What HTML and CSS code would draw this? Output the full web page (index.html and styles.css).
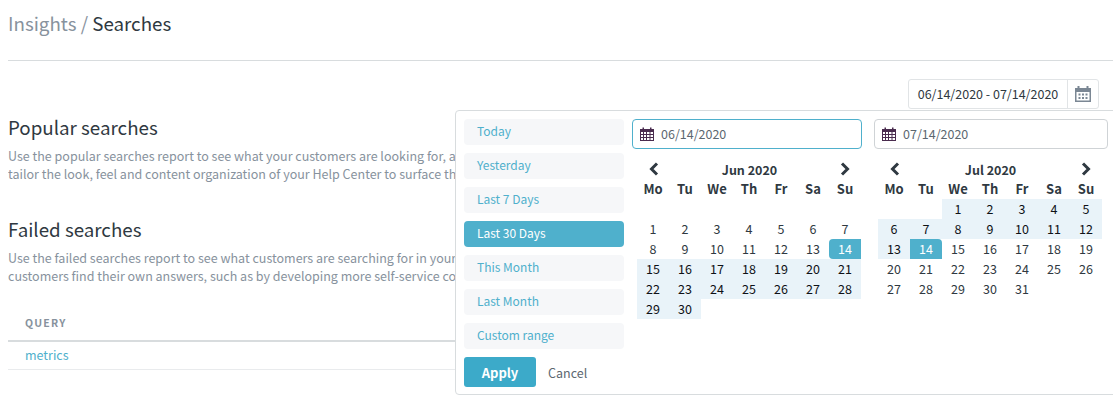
FILE: index.html
```html
<!DOCTYPE html>
<html lang="en">
<head>
    <meta charset="UTF-8">
    <meta name="viewport" content="width=device-width, initial-scale=1.0">
    <title>Insights / Searches</title>
    <link rel="stylesheet" href="styles.css">
</head>
<body>
    <div class="page">
        <h1 class="crumbs"><span class="crumbs-parent">Insights /</span> Searches</h1>

        <div class="toolbar">
            <div class="range-field">
                <span class="range-value">06/14/2020 - 07/14/2020</span>
                <span class="range-addon">
                    <svg width="16" height="16" viewBox="0 0 16 16"><path fill="#7b8794" d="M0 2h2.500V0h2v2h7V0h2v2H16v14H0zM1.500 6v8.500h13V6z"/><path fill="#7b8794" d="M3.500 7.500h2v2h-2zM7 7.500h2v2H7zM10.500 7.500h2v2h-2zM3.500 11h2v2h-2zM7 11h2v2H7zM10.500 11h2v2h-2z"/></svg>
                </span>
            </div>
        </div>

        <section class="report report-popular">
            <h2>Popular searches</h2>
            <p>Use the popular searches report to see what your customers are looking for, and use that information to<br>tailor the look, feel and content organization of your Help Center to surface the right content.</p>
        </section>

        <section class="report report-failed">
            <h2>Failed searches</h2>
            <p>Use the failed searches report to see what customers are searching for in your Help Center and not finding, and help<br>customers find their own answers, such as by developing more self-service content.</p>
        </section>

        <div class="query-table">
            <div class="query-head">QUERY</div>
            <div class="query-row"><a href="#">metrics</a></div>
        </div>
    </div>

    <!-- date range dropdown -->
    <div class="picker">
        <div class="picker-side">
            <a class="range-item" href="#">Today</a>
            <a class="range-item" href="#">Yesterday</a>
            <a class="range-item" href="#">Last 7 Days</a>
            <a class="range-item active" href="#">Last 30 Days</a>
            <a class="range-item" href="#">This Month</a>
            <a class="range-item" href="#">Last Month</a>
            <a class="range-item" href="#">Custom range</a>
            <div class="picker-actions">
                <button class="btn-apply" type="button">Apply</button>
                <a class="btn-cancel" href="#">Cancel</a>
            </div>
        </div>

        <div class="calendar cal-left">
            <div class="date-input focused">
                <svg class="date-icon" width="14" height="14" viewBox="0 0 14 14"><path fill="#4a2c4f" d="M0 2h2.500V0.500h1.500V2h6V0.500h1.500V2H14v12H0zM1 5v2h2V5zm3 0v2h2V5zm3 0v2h2.500V5zm3.500 0v2H13V5zM1 8v2h2V8zm3 0v2h2V8zm3 0v2h2.500V8zm3.500 0v2H13V8zM1 11v2h2v-2zm3 0v2h2v-2zm3 0v2h2.500v-2zm3.500 0v2H13v-2z"/></svg>
                06/14/2020
            </div>
            <div class="month-nav">
                <svg width="12" height="14" viewBox="0 0 12 14"><path d="M9 1.500 3.500 7 9 12.500" fill="none" stroke="#2f3941" stroke-width="3"/></svg>
                <span>Jun 2020</span>
                <svg width="12" height="14" viewBox="0 0 12 14"><path d="M3 1.500 8.500 7 3 12.500" fill="none" stroke="#2f3941" stroke-width="3"/></svg>
            </div>
            <div class="days">
                <b>Mo</b><b>Tu</b><b>We</b><b>Th</b><b>Fr</b><b>Sa</b><b>Su</b>
                <i></i><i></i><i></i><i></i><i></i><i></i><i></i>
                <i>1</i><i>2</i><i>3</i><i>4</i><i>5</i><i>6</i><i>7</i>
                <i>8</i><i>9</i><i>10</i><i>11</i><i>12</i><i>13</i><i class="end end-left">14</i>
                <i class="in">15</i><i class="in">16</i><i class="in">17</i><i class="in">18</i><i class="in">19</i><i class="in">20</i><i class="in">21</i>
                <i class="in">22</i><i class="in">23</i><i class="in">24</i><i class="in">25</i><i class="in">26</i><i class="in">27</i><i class="in">28</i>
                <i class="in">29</i><i class="in">30</i>
            </div>
        </div>

        <div class="calendar cal-right">
            <div class="date-input">
                <svg class="date-icon" width="14" height="14" viewBox="0 0 14 14"><path fill="#4a2c4f" d="M0 2h2.500V0.500h1.500V2h6V0.500h1.500V2H14v12H0zM1 5v2h2V5zm3 0v2h2V5zm3 0v2h2.500V5zm3.500 0v2H13V5zM1 8v2h2V8zm3 0v2h2V8zm3 0v2h2.500V8zm3.500 0v2H13V8zM1 11v2h2v-2zm3 0v2h2v-2zm3 0v2h2.500v-2zm3.500 0v2H13v-2z"/></svg>
                07/14/2020
            </div>
            <div class="month-nav">
                <svg width="12" height="14" viewBox="0 0 12 14"><path d="M9 1.500 3.500 7 9 12.500" fill="none" stroke="#2f3941" stroke-width="3"/></svg>
                <span>Jul 2020</span>
                <svg width="12" height="14" viewBox="0 0 12 14"><path d="M3 1.500 8.500 7 3 12.500" fill="none" stroke="#2f3941" stroke-width="3"/></svg>
            </div>
            <div class="days">
                <b>Mo</b><b>Tu</b><b>We</b><b>Th</b><b>Fr</b><b>Sa</b><b>Su</b>
                <i></i><i></i><i class="in">1</i><i class="in">2</i><i class="in">3</i><i class="in">4</i><i class="in">5</i>
                <i class="in">6</i><i class="in">7</i><i class="in">8</i><i class="in">9</i><i class="in">10</i><i class="in">11</i><i class="in">12</i>
                <i class="in">13</i><i class="end end-right">14</i><i>15</i><i>16</i><i>17</i><i>18</i><i>19</i>
                <i>20</i><i>21</i><i>22</i><i>23</i><i>24</i><i>25</i><i>26</i>
                <i>27</i><i>28</i><i>29</i><i>30</i><i>31</i>
            </div>
        </div>
    </div>
</body>
</html>
```

FILE: styles.css
```css
html, body {
    height: 100%;
}

body {
    margin: 0;
    font-family: "Noto Sans CJK SC", "Noto Sans", sans-serif;
    color: #2f3941;
    background: #fff;
    overflow: hidden;
    position: relative;
}

.page {
    padding: 0 0 0 8px;
}

.crumbs {
    margin: 0;
    height: 61px;
    box-sizing: border-box;
    padding-top: 8px;
    border-bottom: 1px solid #d8dcde;
    font-size: 18.750px;
    font-weight: 400;
    line-height: 30px;
}

.crumbs-parent {
    color: #87929d;
}

.toolbar {
    display: flex;
    justify-content: flex-end;
    padding: 18px 14px 0 0;
}

.range-field {
    display: flex;
    height: 30px;
    box-sizing: border-box;
    border: 1px solid #e1e4e6;
    border-radius: 3px;
    font-size: 12.500px;
}

.range-value {
    width: 159px;
    box-sizing: border-box;
    text-align: center;
    line-height: 28px;
    border-right: 1px solid #e1e4e6;
}

.range-addon {
    width: 30px;
    display: flex;
    align-items: center;
    justify-content: center;
}

.report {
    white-space: nowrap;
    overflow: hidden;
}

.report h2 {
    margin: 0 0 5px;
    font-size: 18.750px;
    font-weight: 400;
    line-height: 30px;
}

.report p {
    margin: 0;
    font-size: 12.500px;
    line-height: 18px;
    color: #87929d;
}

.report-popular {
    padding-top: 3px;
}

.report-failed {
    padding-top: 31px;
}

.query-table {
    margin-top: 24px;
    font-size: 12.500px;
}

.query-head {
    height: 31px;
    padding-left: 17px;
    border-bottom: 2px solid #d8dcde;
    font-size: 10.500px;
    font-weight: 700;
    letter-spacing: 1.200px;
    line-height: 28px;
    color: #87929d;
}

.query-row {
    height: 27px;
    padding-left: 17px;
    border-bottom: 1px solid #e9ebed;
    line-height: 25px;
}

.query-row a {
    color: #4fb0cc;
    text-decoration: none;
}

/* dropdown */
.picker {
    position: absolute;
    left: 455px;
    top: 110px;
    width: 670px;
    height: 285px;
    box-sizing: border-box;
    padding: 8px 0 0 8px;
    display: flex;
    background: #fff;
    border: 1px solid #d8dcde;
    border-radius: 4px;
    font-size: 12.500px;
}

.picker-side {
    width: 160px;
    display: flex;
    flex-direction: column;
    gap: 8px;
}

.range-item {
    height: 26px;
    padding-left: 13px;
    border-radius: 4px;
    background: #f6f7f9;
    color: #4fb0cc;
    font-size: 12px;
    line-height: 24px;
    text-decoration: none;
}

.range-item.active {
    background: #4fb0cc;
    color: #fff;
}

.picker-actions {
    display: flex;
    align-items: center;
    gap: 12px;
}

.btn-apply {
    width: 72px;
    height: 30px;
    border: 0;
    border-radius: 3px;
    background: #3caac9;
    color: #fff;
    font: 700 13px "Noto Sans CJK SC", "Noto Sans", sans-serif;
}

.btn-cancel {
    color: #5c6770;
    text-decoration: none;
}

.calendar {
    flex: none;
}

.cal-left {
    margin-left: 8px;
    width: 230px;
}

.cal-right {
    margin-left: 12px;
    width: 234px;
}

.date-input {
    height: 30px;
    box-sizing: border-box;
    display: flex;
    align-items: center;
    gap: 7px;
    padding-left: 7px;
    padding-bottom: 1px;
    border: 1px solid #cfd3d6;
    border-radius: 4px;
    color: #5c6770;
}

.date-input.focused {
    border-color: #4fb0cc;
}

.month-nav {
    display: flex;
    align-items: center;
    justify-content: space-between;
    width: 224px;
    height: 20px;
    margin: 10px 0 0 5px;
    padding: 0 10px 0 11px;
    box-sizing: border-box;
    font-size: 12.500px;
    font-weight: 700;
}

.cal-right .month-nav {
    margin-left: 4px;
}

.days {
    display: grid;
    grid-template-columns: repeat(7, 32px);
    grid-auto-rows: 20px;
    margin-left: 5px;
    text-align: center;
    line-height: 20px;
}

.cal-right .days {
    margin-left: 4px;
}

.days b {
    font-size: 13px;
}

.days i {
    font-style: normal;
}

.days .in {
    background: #e9f3f9;
    color: #0e1116;
}

.days .end {
    background: #4fb0cc;
    color: #fff;
}

.days .end-left {
    border-radius: 4px 0 0 4px;
}

.days .end-right {
    border-radius: 0 4px 0 0;
}
```
